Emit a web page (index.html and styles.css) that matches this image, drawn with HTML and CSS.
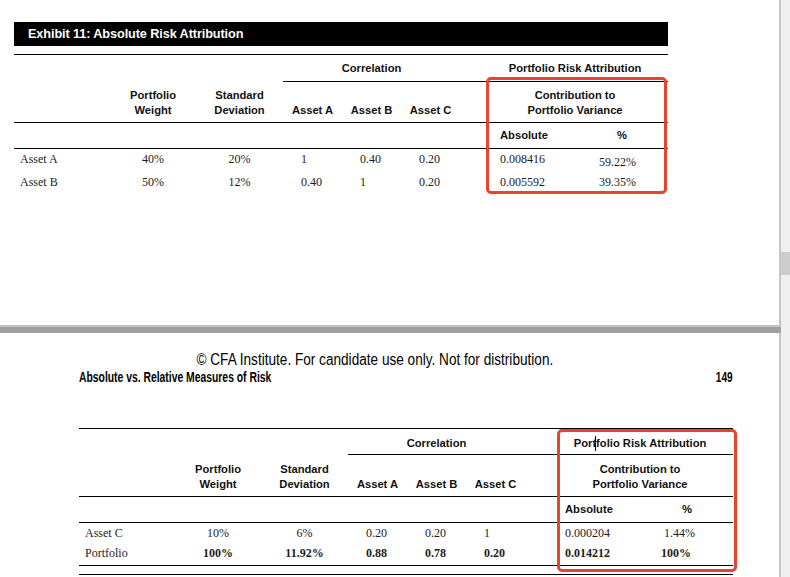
FILE: index.html
```html
<!DOCTYPE html>
<html lang="en">
<head>
<meta charset="utf-8">
<title>Absolute Risk Attribution</title>
<link rel="stylesheet" href="styles.css">
</head>
<body>
<div class="screen">
  <div class="viewer">
    <section class="page page-top">
      <h2 class="exhibit">Exhibit 11: Absolute Risk Attribution</h2>
      <div class="tbl-wrap">
        <table class="risk">
          <colgroup>
            <col class="c-label"><col class="c-w"><col class="c-sd"><col class="c-a"><col class="c-a"><col class="c-a"><col class="c-gap"><col class="c-abs"><col class="c-pct">
          </colgroup>
          <tr class="r-group">
            <th colspan="3"></th>
            <th colspan="3" class="rule">Correlation</th>
            <th class="rule"></th>
            <th colspan="2" class="rule span2">Portfolio Risk Attribution</th>
          </tr>
          <tr class="r-head">
            <th></th>
            <th>Portfolio<br>Weight</th>
            <th>Standard<br>Deviation</th>
            <th>Asset A</th>
            <th>Asset B</th>
            <th>Asset C</th>
            <th></th>
            <th colspan="2" class="span2">Contribution to<br>Portfolio Variance</th>
          </tr>
          <tr class="r-sub">
            <th colspan="7"></th>
            <th class="abs">Absolute</th>
            <th class="pct-h">%</th>
          </tr>
          <tr class="r-data">
            <td class="label">Asset A</td>
            <td class="ctr">40%</td>
            <td class="ctr">20%</td>
            <td class="corr">1</td>
            <td class="corr">0.40</td>
            <td class="corr">0.20</td>
            <td></td>
            <td class="abs">0.008416</td>
            <td class="pct low">59.22%</td>
          </tr>
          <tr class="r-data">
            <td class="label">Asset B</td>
            <td class="ctr">50%</td>
            <td class="ctr">12%</td>
            <td class="corr">0.40</td>
            <td class="corr">1</td>
            <td class="corr">0.20</td>
            <td></td>
            <td class="abs">0.005592</td>
            <td class="pct">39.35%</td>
          </tr>
        </table>
        <div class="callout callout-top"></div>
      </div>
    </section>

    <div class="page-break"></div>

    <section class="page page-bottom">
      <p class="copyright"><span class="narrow">© CFA Institute. For candidate use only. Not for distribution.</span></p>
      <div class="running">
        <span class="running-title">Absolute vs. Relative Measures of Risk</span>
        <span class="page-no">149</span>
      </div>
      <div class="tbl-wrap">
        <table class="risk risk-b">
          <colgroup>
            <col class="c-label"><col class="c-w"><col class="c-sd"><col class="c-a"><col class="c-a"><col class="c-a"><col class="c-gap"><col class="c-abs"><col class="c-pct">
          </colgroup>
          <tr class="r-group">
            <th colspan="3"></th>
            <th colspan="3" class="rule">Correlation</th>
            <th class="rule"></th>
            <th colspan="2" class="rule span2">Portfolio Risk Attribution</th>
          </tr>
          <tr class="r-head">
            <th></th>
            <th>Portfolio<br>Weight</th>
            <th>Standard<br>Deviation</th>
            <th>Asset A</th>
            <th>Asset B</th>
            <th>Asset C</th>
            <th></th>
            <th colspan="2" class="span2">Contribution to<br>Portfolio Variance</th>
          </tr>
          <tr class="r-sub">
            <th colspan="7"></th>
            <th class="abs">Absolute</th>
            <th class="pct-h">%</th>
          </tr>
          <tr class="r-data r-short">
            <td class="label">Asset C</td>
            <td class="ctr">10%</td>
            <td class="ctr">6%</td>
            <td class="corr">0.20</td>
            <td class="corr">0.20</td>
            <td class="corr">1</td>
            <td></td>
            <td class="abs">0.000204</td>
            <td class="pct">1.44%</td>
          </tr>
          <tr class="r-data r-total">
            <td class="label">Portfolio</td>
            <td class="ctr b">100%</td>
            <td class="ctr b">11.92%</td>
            <td class="corr b">0.88</td>
            <td class="corr b">0.78</td>
            <td class="corr b">0.20</td>
            <td></td>
            <td class="abs b">0.014212</td>
            <td class="pct pct-total b">100%</td>
          </tr>
        </table>
        <div class="end-rule"></div>
        <div class="callout callout-bottom"></div>
        <div class="caret"></div>
      </div>
    </section>
  </div>
  <div class="scrollbar"><div class="thumb"></div></div>
</div>
</body>
</html>
```

FILE: styles.css
```css
* { box-sizing: border-box; }
html, body { margin: 0; padding: 0; background: #fff; }
body { font-family: "Liberation Sans", Arial, sans-serif; color: #000; }

.screen {
  display: flex;
  width: 790px;
  height: 577px;
  overflow: hidden;
}
.viewer {
  width: 781px;
  border-right: 2px solid #c6c6c6;
  display: flex;
  flex-direction: column;
}
.scrollbar {
  width: 9px;
  background: #efefef;
  padding-top: 252px;
}
.thumb {
  height: 23px;
  background: #cdcdcd;
}

/* ---------- top page ---------- */
.page-top {
  height: 325px;
  padding: 22px 0 0 14px;
  flex: none;
}
.exhibit {
  margin: 0;
  width: 654px;
  height: 24px;
  background: #000;
  color: #fff;
  font: bold 12.7px/24px "Liberation Sans", Arial, sans-serif;
  padding-left: 14px;
  letter-spacing: -0.1px;
}
.page-top .tbl-wrap { margin-top: 8px; }

.page-break {
  flex: none;
  height: 8px;
  border-top: 2px solid #c4c4c4;
  background: #a0a0a0;
  margin-right: -2px;
}

/* ---------- bottom page ---------- */
.page-bottom {
  padding-left: 79px;
  flex: none;
}
.copyright {
  margin: 18px 0 0 0;
  width: 592px;
  height: 17px;
  text-align: center;
  font: 16px/17px "Liberation Sans", Arial, sans-serif;
  color: #000;
}
.narrow {
  display: inline-block;
  white-space: nowrap;
  transform: scaleX(0.85);
  transform-origin: center;
}
.running {
  width: 654px;
  display: flex;
  justify-content: space-between;
  align-items: center;
  height: 16px;
  margin-top: 1px;
  font-family: "Liberation Sans", Arial, sans-serif;
  font-weight: bold;
}
.running-title {
  display: inline-block;
  font-size: 14px;
  white-space: nowrap;
  transform: scaleX(0.74);
  transform-origin: left center;
}
.page-no {
  display: inline-block;
  font-size: 14px;
  transform: scaleX(0.72);
  transform-origin: right center;
  padding-right: 1px;
}
.page-bottom .tbl-wrap { margin-top: 43px; }

/* ---------- table ---------- */
.tbl-wrap {
  position: relative;
  width: 654px;
}
.risk {
  width: 654px;
  table-layout: fixed;
  border-collapse: separate;
  border-spacing: 0;
  border-top: 1px solid #000;
}
.c-label { width: 96px; }
.c-w { width: 86px; }
.c-sd { width: 87px; }
.c-a { width: 59px; }
.c-gap { width: 26px; }
.c-abs { width: 104px; }
.c-pct { width: 78px; }

.risk th {
  font: bold 11.2px/15px "Liberation Sans", Arial, sans-serif;
  text-align: center;
  padding: 0;
  color: #111;
}
.risk th.span2 { padding-right: 4px; }
.risk td {
  font: 12px/15px "Liberation Serif", "Times New Roman", serif;
  color: #1c1c1c;
  padding: 3px 0 0 0;
  vertical-align: top;
  white-space: nowrap;
}
.risk td.b { font-weight: bold; }
.r-group { height: 27px; }
.r-group th { vertical-align: middle; padding-top: 1px; }
.r-group th.rule { border-bottom: 1px solid #000; }
.r-head { height: 41px; }
.r-head th {
  vertical-align: bottom;
  padding-bottom: 4px;
  border-bottom: 1px solid #000;
}
.r-sub { height: 26px; }
.r-sub th {
  vertical-align: middle;
  border-bottom: 1px solid #000;
}
.risk th.abs { text-align: left; padding-left: 14px; }
.risk th.pct-h { text-align: left; padding-left: 27px; }

.r-data { height: 23px; }
.risk td.label { padding-left: 6px; }
.risk td.ctr { text-align: center; }
.risk td.corr { padding-left: 18px; }
.risk td.abs { padding-left: 14px; }
.risk td.pct { padding-left: 9px; }
.risk td.low { padding-top: 6px; }

/* bottom variant */
.risk-b .r-group { height: 26px; }
.risk-b .r-group th { padding-top: 3px; }
.risk-b .r-head { height: 42px; }
.risk-b .r-short { height: 20px; }
.risk-b .r-total td {
  border-bottom: 1px solid #000;
  height: 23px;
}
.risk-b td.pct-total { padding-left: 6px; }
.end-rule {
  margin-top: 8px;
  border-top: 1px solid #000;
}

/* annotation overlays */
.callout {
  position: absolute;
  border: 3px solid #e5452f;
  border-radius: 5px;
}
.callout-top {
  left: 472px;
  top: 23px;
  width: 181px;
  height: 117px;
}
.callout-bottom {
  left: 478px;
  top: 1px;
  width: 180px;
  height: 143px;
}
.caret {
  position: absolute;
  left: 516px;
  top: 8px;
  width: 1px;
  height: 15px;
  background: #000;
}
```
